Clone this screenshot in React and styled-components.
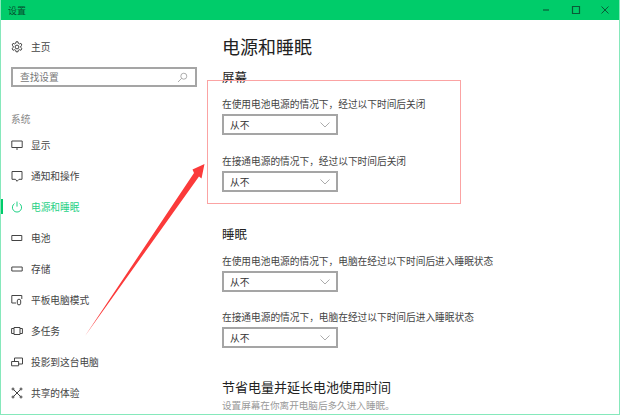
import React from 'react';
import styled, { createGlobalStyle } from 'styled-components';

const GlobalStyle = createGlobalStyle`
  html, body {
    margin: 0;
    padding: 0;
    background: #fff;
  }
  body {
    font-family: "Noto Sans CJK SC", "Liberation Sans", sans-serif;
  }
`;

const Window = styled.div`
  position: relative;
  width: 620px;
  height: 415px;
  box-sizing: border-box;
  border-left: 1px solid #86e8bb;
  border-right: 1px solid #86e8bb;
  border-bottom: 1px solid #86e8bb;
  overflow: hidden;
  background: #fff;
`;

const TitleBar = styled.div`
  display: flex;
  align-items: center;
  justify-content: space-between;
  height: 20px;
  margin: 0 -1px;
  padding-left: 8px;
  background: #00cc6a;
  color: #064d2e;
  font-size: 9px;
`;

const WindowButtons = styled.div`
  display: flex;
  color: #0a5a38;
`;

const WindowButton = styled.span`
  display: flex;
  align-items: center;
  justify-content: center;
  width: 29.5px;
  height: 20px;
`;

const Body = styled.div`
  display: flex;
`;

const Sidebar = styled.nav`
  flex: none;
  width: 221px;
  padding-top: 11px;
`;

const NavItem = styled.div`
  position: relative;
  display: flex;
  align-items: center;
  gap: 8px;
  height: 31px;
  padding-left: 10px;
  font-size: 9.7px;
  color: ${p => (p.$active ? '#1fd185' : '#444')};

  ${p => p.$active && `
    &::before {
      content: '';
      position: absolute;
      left: -1px;
      top: 8px;
      width: 3px;
      height: 15px;
      background: #00cc6a;
    }
  `}
`;

const IconSlot = styled.span`
  display: flex;
  width: 12px;
  height: 12px;
  flex: none;
  color: ${p => (p.$active ? '#1fd185' : '#444')};
`;

const SearchBox = styled.div`
  display: flex;
  align-items: center;
  justify-content: space-between;
  box-sizing: border-box;
  width: 186px;
  height: 20px;
  margin: 5px 0 0 10px;
  padding: 0 7px;
  border: 2px solid #a5a5a5;
  font-size: 9.7px;
  color: #777;
`;

const SectionLabel = styled.div`
  margin: 24px 0 0 10px;
  height: 17px;
  line-height: 17px;
  font-size: 9.7px;
  color: #888;
`;

const NavList = styled.div`
  margin-top: 1px;
`;

const Content = styled.main`
  flex: 1;
  padding-top: 13px;
`;

const PageTitle = styled.h1`
  margin: 0;
  height: 26px;
  line-height: 26px;
  font-size: 18px;
  font-weight: 400;
  color: #222;
`;

const GroupTitle = styled.h2`
  margin: ${p => p.$top}px 0 0 0;
  height: 18px;
  line-height: 18px;
  font-size: ${p => p.$size || 12.5}px;
  font-weight: 400;
  color: #222;
`;

const Field = styled.div`
  margin-top: ${p => p.$top}px;
`;

const FieldLabel = styled.div`
  height: 14px;
  line-height: 14px;
  font-size: 9.7px;
  color: #444;
`;

const Select = styled.div`
  display: flex;
  align-items: center;
  justify-content: space-between;
  box-sizing: border-box;
  width: 116px;
  height: 21px;
  margin-top: 3px;
  padding: 0 6px;
  border: 2px solid #a5a5a5;
  font-size: 9.7px;
  color: #333;
`;

const Hint = styled.div`
  margin-top: 2px;
  font-size: 9.6px;
  line-height: 14px;
  color: #999;
`;

const Marker = styled.div`
  position: absolute;
  left: 206px;
  top: 80px;
  width: 254px;
  height: 124px;
  box-sizing: border-box;
  border: 1px solid #fba3a3;
`;

const ArrowLayer = styled.svg`
  position: absolute;
  left: -1px;
  top: 0;
  pointer-events: none;
`;

const Outline = ({ children }) => (
  <svg width="12" height="12" viewBox="0 0 12 12" fill="none" stroke="currentColor" strokeWidth="1">
    {children}
  </svg>
);

const icons = {
  home: (
    <Outline>
      <circle cx="6" cy="6" r="1.9" />
      <path d="M5 .8h2l.3 1.5 1.2.6 1.4-.6 1 1.7-1.1 1v1.6l1.1 1-1 1.7-1.4-.6-1.2.6-.3 1.5H5l-.3-1.5-1.2-.6-1.4.6-1-1.7 1.1-1V5l-1.1-1 1-1.7 1.4.6 1.2-.6z" />
    </Outline>
  ),
  display: (
    <Outline>
      <path d="M.8 2h10.4v6.5H.8zM5 10h2" />
    </Outline>
  ),
  notify: (
    <Outline>
      <path d="M1 1.5h10v7.800H8l-2 2-1.500-2H1z" />
    </Outline>
  ),
  power: (
    <Outline>
      <path d="M3.5 2.6a4.6 4.6 0 1 0 5 0M6 .6v5" />
    </Outline>
  ),
  battery: (
    <Outline>
      <path d="M.8 3.5h10v5H.8z" />
    </Outline>
  ),
  storage: (
    <Outline>
      <path d="M.8 4h10.4v4H.8z" />
    </Outline>
  ),
  tablet: (
    <Outline>
      <path d="M5 9H.8V1.5h10V5M8 5.2a1.7 1.7 0 0 1 1.7 1.7v2.3a1.7 1.7 0 0 1-3.4 0V6.900A1.7 1.7 0 0 1 8 5.200z" />
    </Outline>
  ),
  multitask: (
    <Outline>
      <path d="M3 2.5h6v7H3zM3 3.5H.6v5H3M9 3.5h2.4v5H9" />
    </Outline>
  ),
  project: (
    <Outline>
      <path d="M3.5 5V2h8v6H8M.6 5.5h7v4.3h-7z" />
    </Outline>
  ),
  share: (
    <Outline>
      <path d="M2.5 2.5l7 7M9.5 2.5l-7 7" />
      <circle cx="2" cy="2" r="1" />
      <circle cx="10" cy="2" r="1" />
      <circle cx="2" cy="10" r="1" />
      <circle cx="10" cy="10" r="1" />
    </Outline>
  ),
};

const navItems = [
  { icon: 'display', label: '显示' },
  { icon: 'notify', label: '通知和操作' },
  { icon: 'power', label: '电源和睡眠', active: true },
  { icon: 'battery', label: '电池' },
  { icon: 'storage', label: '存储' },
  { icon: 'tablet', label: '平板电脑模式' },
  { icon: 'multitask', label: '多任务' },
  { icon: 'project', label: '投影到这台电脑' },
  { icon: 'share', label: '共享的体验' },
];

const Chevron = () => (
  <svg width="10" height="6" viewBox="0 0 10 6" fill="none" stroke="#888" strokeWidth="0.7">
    <path d="M.5.5L5 5 9.5.5" />
  </svg>
);

const Dropdown = ({ value }) => (
  <Select>
    {value}
    <Chevron />
  </Select>
);

export default function App() {
  return (
    <>
      <GlobalStyle />
      <Window>
        <TitleBar>
          设置
          <WindowButtons>
            <WindowButton>
              <svg width="10" height="10" viewBox="0 0 10 10" stroke="currentColor" strokeWidth="1.2">
                <path d="M2 5h6" />
              </svg>
            </WindowButton>
            <WindowButton>
              <svg width="10" height="10" viewBox="0 0 10 10" fill="none" stroke="currentColor" strokeWidth="1.2">
                <path d="M1.5 1.5h7v7h-7z" />
              </svg>
            </WindowButton>
            <WindowButton>
              <svg width="10" height="10" viewBox="0 0 10 10" stroke="currentColor" strokeWidth="1">
                <path d="M1.5 1.5l7 7M8.5 1.5l-7 7" />
              </svg>
            </WindowButton>
          </WindowButtons>
        </TitleBar>
        <Body>
          <Sidebar>
            <NavItem>
              <IconSlot>{icons.home}</IconSlot>
              主页
            </NavItem>
            <SearchBox>
              查找设置
              <svg width="11" height="11" viewBox="0 0 11 11" fill="none" stroke="#999" strokeWidth="0.8">
                <circle cx="6.8" cy="4.2" r="3" />
                <path d="M4.6 6.4L1 10" />
              </svg>
            </SearchBox>
            <SectionLabel>系统</SectionLabel>
            <NavList>
              {navItems.map(item => (
                <NavItem key={item.label} $active={item.active}>
                  <IconSlot $active={item.active}>{icons[item.icon]}</IconSlot>
                  {item.label}
                </NavItem>
              ))}
            </NavList>
          </Sidebar>
          <Content>
            <PageTitle>电源和睡眠</PageTitle>
            <GroupTitle $top={9}>屏幕</GroupTitle>
            <Field $top={11}>
              <FieldLabel>在使用电池电源的情况下，经过以下时间后关闭</FieldLabel>
              <Dropdown value="从不" />
            </Field>
            <Field $top={19}>
              <FieldLabel>在接通电源的情况下，经过以下时间后关闭</FieldLabel>
              <Dropdown value="从不" />
            </Field>
            <GroupTitle $top={33}>睡眠</GroupTitle>
            <Field $top={11}>
              <FieldLabel>在使用电池电源的情况下，电脑在经过以下时间后进入睡眠状态</FieldLabel>
              <Dropdown value="从不" />
            </Field>
            <Field $top={18}>
              <FieldLabel>在接通电源的情况下，电脑在经过以下时间后进入睡眠状态</FieldLabel>
              <Dropdown value="从不" />
            </Field>
            <GroupTitle $top={30} $size={13}>节省电量并延长电池使用时间</GroupTitle>
            <Hint>设置屏幕在你离开电脑后多久进入睡眠。</Hint>
          </Content>
        </Body>
        <Marker />
        <ArrowLayer width="620" height="415" viewBox="0 0 620 415">
          <path d="M85 336L194 173 192.500 169.500 204.500 164 201.500 178.500 199 176.500Z" fill="#fb3a3a" />
        </ArrowLayer>
      </Window>
    </>
  );
}
